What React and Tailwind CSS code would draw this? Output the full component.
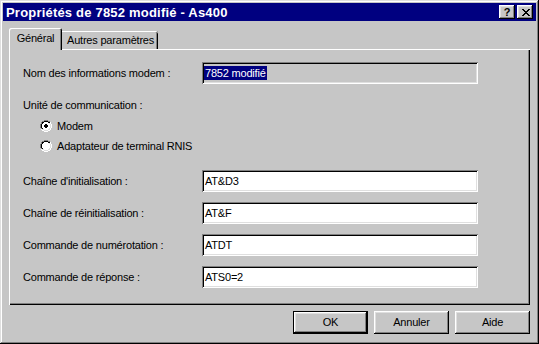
import React from "react";

const RADIO_ROWS = [
  "....GGGG....",
  "..GGKKKKGG..",
  ".GKKWWWWKKW.",
  ".GKWWWWWWLW.",
  "GKWWWWWWWWLW",
  "GKWWWWWWWWLW",
  "GKWWWWWWWWLW",
  "GKWWWWWWWWLW",
  ".GKWWWWWWLW.",
  ".WLLWWWWLLW.",
  "..WWLLLLWW..",
  "....WWWW....",
];
const COLORS = { G: "#808080", K: "#000000", W: "#ffffff", L: "#dfdfdf" };
const DOT = [
  [5, 4], [6, 4],
  [4, 5], [5, 5], [6, 5], [7, 5],
  [4, 6], [5, 6], [6, 6], [7, 6],
  [5, 7], [6, 7],
];

function Radio({ checked }) {
  const rects = [];
  RADIO_ROWS.forEach((row, y) => {
    row.split("").forEach((c, x) => {
      if (c !== ".") rects.push(<rect key={`${x}-${y}`} x={x} y={y} width="1" height="1" fill={COLORS[c]} />);
    });
  });
  return (
    <svg width="12" height="12" viewBox="0 0 12 12" shapeRendering="crispEdges" className="shrink-0">
      {rects}
      {checked && DOT.map(([x, y]) => <rect key={`d${x}-${y}`} x={x} y={y} width="1" height="1" fill="#000" />)}
    </svg>
  );
}

const X_ROWS = [
  "KK....KK",
  ".KK..KK.",
  "..KKKK..",
  "...KK...",
  "..KKKK..",
  ".KK..KK.",
  "KK....KK",
];

function CloseGlyph() {
  const rects = [];
  X_ROWS.forEach((row, y) =>
    row.split("").forEach((c, x) => {
      if (c === "K") rects.push(<rect key={`${x}-${y}`} x={x} y={y} width="1" height="1" fill="#000" />);
    })
  );
  return (
    <svg width="8" height="7" viewBox="0 0 8 7" shapeRendering="crispEdges">
      {rects}
    </svg>
  );
}

function Field({ label, value, selected }) {
  return (
    <div className="flex items-center h-[22px]">
      <div className="w-[179px] leading-[13px]">{label}</div>
      <div
        className={`w-[276px] h-[22px] flex items-center pl-[2px] leading-[13px] shadow-[inset_1px_1px_#808080,inset_-1px_-1px_#fff,inset_2px_2px_#000,inset_-2px_-2px_#dfdfdf] ${
          selected ? "bg-[#c6c6c6]" : "bg-white"
        }`}
      >
        {selected ? (
          <span className="bg-[#000080] text-white px-[1px] leading-[14px]">{value}</span>
        ) : (
          <span className="pl-[1px]">{value}</span>
        )}
      </div>
    </div>
  );
}

export default function App() {
  return (
    <div className="w-[539px] h-[344px] bg-[#c6c6c6] p-[3px] flex flex-col text-[11px] tracking-[-0.2px] text-black font-['Liberation_Sans',Arial,sans-serif] shadow-[inset_-1px_-1px_#000,inset_1px_1px_#dfdfdf,inset_-2px_-2px_#808080,inset_2px_2px_#fff]">
      {/* Title bar */}
      <div className="h-[18px] shrink-0 bg-[#000080] flex items-center justify-between pl-[3px] pr-[3px]">
        <span className="text-white font-bold text-[13px] tracking-[0.2px] leading-[15px]">Propriétés de 7852 modifié - As400</span>
        <div className="flex gap-[2px]">
          <div className="w-[16px] h-[14px] bg-[#c6c6c6] flex items-center justify-center font-bold text-[11px] leading-[11px] tracking-normal shadow-[inset_-1px_-1px_#000,inset_1px_1px_#fff,inset_-2px_-2px_#808080,inset_2px_2px_#dfdfdf]">
            ?
          </div>
          <div className="w-[16px] h-[14px] bg-[#c6c6c6] flex items-center justify-center pl-[1px] shadow-[inset_-1px_-1px_#000,inset_1px_1px_#fff,inset_-2px_-2px_#808080,inset_2px_2px_#dfdfdf]">
            <CloseGlyph />
          </div>
        </div>
      </div>

      {/* Body */}
      <div className="flex-1 flex flex-col pt-[7px] px-[6px]">
        {/* Tabs */}
        <div className="h-[21px] flex items-end relative z-10">
          <div className="w-[53px] h-[22px] -mb-px bg-[#c6c6c6] rounded-t-[2px] pt-[4px] text-center leading-[13px] shadow-[inset_1px_1px_#fff,inset_-1px_0_#000,inset_-2px_0_#808080]">
            Général
          </div>
          <div className="w-[96px] h-[18px] bg-[#c6c6c6] rounded-tr-[2px] pt-[3px] pl-[5px] leading-[13px] shadow-[inset_0_1px_#fff,inset_-1px_0_#000,inset_-2px_0_#808080]">
            Autres paramètres
          </div>
        </div>

        {/* Panel */}
        <div className="h-[256px] flex flex-col pt-[13px] pl-[14px] shadow-[inset_1px_1px_#fff,inset_-1px_-1px_#000,inset_-2px_-2px_#808080]">
          <Field label="Nom des informations modem :" value="7852 modifié" selected />

          <div className="mt-[15px] leading-[13px] h-[13px]">Unité de communication :</div>
          <div className="mt-[4px] pl-[17px] flex flex-col">
            <div className="h-[20px] flex items-center gap-[5px]">
              <Radio checked />
              <span className="leading-[13px]">Modem</span>
            </div>
            <div className="h-[20px] flex items-center gap-[5px]">
              <Radio />
              <span className="leading-[13px]">Adaptateur de terminal RNIS</span>
            </div>
          </div>

          <div className="mt-[14px] flex flex-col gap-[10px]">
            <Field label="Chaîne d'initialisation :" value="AT&D3" />
            <Field label="Chaîne de réinitialisation :" value="AT&F" />
            <Field label="Commande de numérotation :" value="ATDT" />
            <Field label="Commande de réponse :" value="ATS0=2" />
          </div>
        </div>

        {/* Buttons */}
        <div className="mt-[6px] flex justify-end gap-[6px]">
          <div className="w-[75px] h-[23px] flex items-center justify-center leading-[13px] shadow-[inset_0_0_0_1px_#000,inset_-2px_-2px_#000,inset_2px_2px_#fff,inset_-3px_-3px_#808080,inset_3px_3px_#dfdfdf]">
            OK
          </div>
          <div className="w-[75px] h-[23px] flex items-center justify-center leading-[13px] shadow-[inset_-1px_-1px_#000,inset_1px_1px_#fff,inset_-2px_-2px_#808080,inset_2px_2px_#dfdfdf]">
            Annuler
          </div>
          <div className="w-[75px] h-[23px] flex items-center justify-center leading-[13px] shadow-[inset_-1px_-1px_#000,inset_1px_1px_#fff,inset_-2px_-2px_#808080,inset_2px_2px_#dfdfdf]">
            Aide
          </div>
        </div>
      </div>
    </div>
  );
}
